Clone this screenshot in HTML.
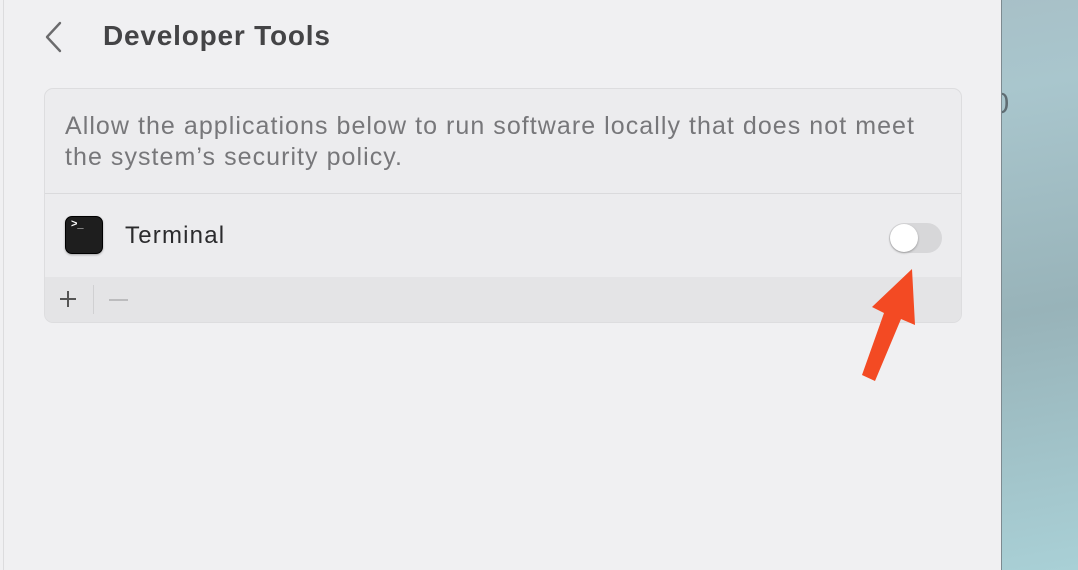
<!DOCTYPE html>
<html><head><meta charset="utf-8">
<style>
html,body{margin:0;padding:0;}
body{width:1078px;height:570px;overflow:hidden;position:relative;font-family:"Liberation Sans",sans-serif;background:linear-gradient(170deg,#a4b4bc 0%,#a9c6cd 35%,#98b3b9 65%,#a9d0d6 100%);}
#win{position:absolute;left:0;top:0;width:1001px;height:570px;background:#f0f0f2;border-right:1px solid #7d8a90;z-index:2;}
#win:before{content:"";position:absolute;left:3px;top:0;width:1px;height:570px;background:#dcdcde;}
.t{position:absolute;white-space:nowrap;}
#card{position:absolute;left:44px;top:88px;width:916px;height:233px;border:1px solid #dddddf;border-radius:9px;background:#ececee;overflow:hidden;}
#row{position:absolute;left:0;top:104px;width:100%;height:83px;border-top:1px solid #dadadc;border-bottom:1px solid #d8d8da;background:#ececee;}
#foot{position:absolute;left:0;top:188px;width:100%;height:45px;background:#e4e4e6;}
#tog{position:absolute;left:889px;top:223px;width:53px;height:30px;border-radius:15px;background:#d7d7d9;}
#knob{position:absolute;left:1px;top:1px;width:28px;height:28px;border-radius:50%;background:#fff;box-shadow:0 1px 2px rgba(0,0,0,.3);}
</style></head><body>
<div class="t" style="left:993px;top:88px;font-size:29px;color:#5f6c72;z-index:1;">0</div>
<div id="win">
<svg style="position:absolute;left:40px;top:20px" width="28" height="34"><path d="M20 3 L7 17 L20 31" fill="none" stroke="#6b6b6d" stroke-width="2.4" stroke-linecap="round" stroke-linejoin="round"/></svg>
<div class="t" style="left:103px;top:20px;font-size:28px;font-weight:bold;color:#444446;letter-spacing:0.8px;">Developer Tools</div>
<div id="card">
<div class="t" style="left:20px;top:22px;font-size:25px;letter-spacing:1.05px;line-height:31px;color:#77777a;">Allow the applications below to run software locally that does not meet<br>the system’s security policy.</div>
<div id="row"></div>
<div id="foot">
<svg style="position:absolute;left:13px;top:12px" width="20" height="20"><path d="M10 2V18M2 10H18" stroke="#555" stroke-width="2"/></svg>
<div style="position:absolute;left:48px;top:8px;width:1px;height:29px;background:#d0d0d2"></div>
<div style="position:absolute;left:64px;top:22px;width:19px;height:2px;background:#bcbcbe"></div>
</div>
</div>
<div style="position:absolute;left:65px;top:216px;width:38px;height:38px;border-radius:7px;background:#1e1e1e;border:1px solid #000;box-shadow:0 1px 2px rgba(0,0,0,.3);box-sizing:border-box;"></div>
<div class="t" style="left:71px;top:218px;font-size:11px;font-weight:bold;color:#fff;">&gt;_</div>
<div class="t" style="left:125px;top:222px;font-size:24px;letter-spacing:1.2px;color:#2b2b2d;">Terminal</div>
<div id="tog"><div id="knob"></div></div>
<svg style="position:absolute;left:0;top:0" width="1001" height="570"><polygon points="912,269 872,307 884,313 862,375 875,381 901,319 915,325" fill="#f34a23"/></svg>
</div>
</body></html>
